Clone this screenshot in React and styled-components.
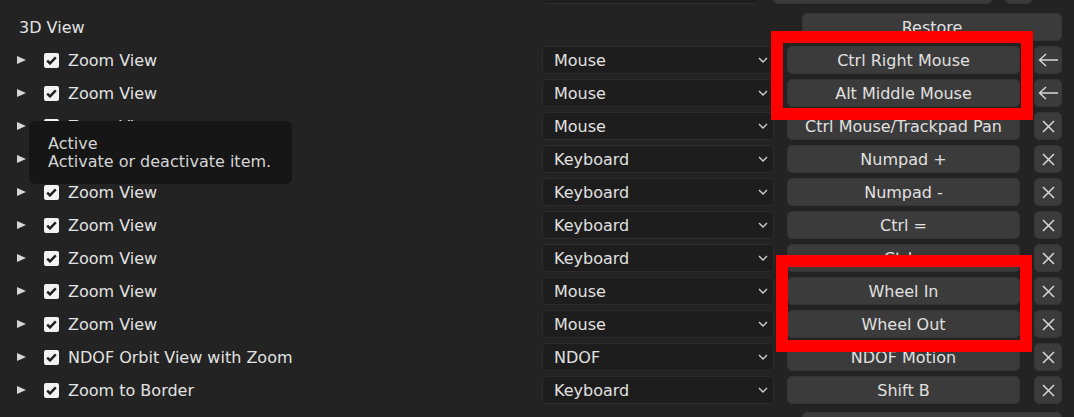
import React from 'react';
import styled, { createGlobalStyle } from 'styled-components';

const GlobalStyle = createGlobalStyle`
  html, body {
    margin: 0;
    padding: 0;
    background: #232323;
    overflow: hidden;
  }
  body {
    font-family: "DejaVu Sans", "Liberation Sans", sans-serif;
    color: #e4e4e4;
  }
`;

const ITEMS = [
  { label: 'Zoom View', type: 'Mouse', key: 'Ctrl Right Mouse', action: 'restore' },
  { label: 'Zoom View', type: 'Mouse', key: 'Alt Middle Mouse', action: 'restore' },
  { label: 'Zoom View', type: 'Mouse', key: 'Ctrl Mouse/Trackpad Pan', action: 'remove' },
  { label: 'Zoom View', type: 'Keyboard', key: 'Numpad +', action: 'remove' },
  { label: 'Zoom View', type: 'Keyboard', key: 'Numpad -', action: 'remove' },
  { label: 'Zoom View', type: 'Keyboard', key: 'Ctrl =', action: 'remove' },
  { label: 'Zoom View', type: 'Keyboard', key: 'Ctrl -', action: 'remove' },
  { label: 'Zoom View', type: 'Mouse', key: 'Wheel In', action: 'remove' },
  { label: 'Zoom View', type: 'Mouse', key: 'Wheel Out', action: 'remove' },
  { label: 'NDOF Orbit View with Zoom', type: 'NDOF', key: 'NDOF Motion', action: 'remove' },
  { label: 'Zoom to Border', type: 'Keyboard', key: 'Shift B', action: 'remove' },
];

const Disclosure = () => (
  <svg width="9" height="8" viewBox="0 0 9 8">
    <polygon points="0,0 9,4 0,8" fill="#d6d6d6" />
  </svg>
);

const Chevron = () => (
  <svg width="10" height="6" viewBox="0 0 10 6">
    <path d="M1 1 L5 5 L9 1" fill="none" stroke="#cfcfcf" strokeWidth="1.4" />
  </svg>
);

const CrossIcon = () => (
  <svg width="13" height="13" viewBox="0 0 13 13">
    <path d="M1 1 L12 12 M12 1 L1 12" stroke="#d8d8d8" strokeWidth="1.5" />
  </svg>
);

const BackArrow = () => (
  <svg width="21" height="14" viewBox="0 0 21 14">
    <path d="M20 7 H2 M8 1 L1.5 7 L8 13" fill="none" stroke="#d8d8d8" strokeWidth="1.4" />
  </svg>
);

const App = () => (
  <>
    <GlobalStyle />
    <Page>
      <PartialRow>
        <Spacer $width={541} />
        <Dropdown $width={219} />
        <KeyButton $width={219} $gap={13} />
        <IconButton $width={27} $gap={13} />
      </PartialRow>

      <HeaderRow>
        <SectionTitle>3D View</SectionTitle>
        <WideButton>Restore</WideButton>
      </HeaderRow>

      {ITEMS.map((item, i) => (
        <ItemRow key={i}>
          <LabelCell>
            <Disclosure />
            <Checkbox>
              <svg width="11" height="9" viewBox="0 0 11 9">
                <path d="M1.2 4.6 L4 7.4 L9.8 1.4" fill="none" stroke="#1c1c1c" strokeWidth="2.4" />
              </svg>
            </Checkbox>
            <Label>{item.label}</Label>
          </LabelCell>
          <Dropdown $width={232}>
            <span>{item.type}</span>
            <Chevron />
          </Dropdown>
          <KeyButton $width={233} $gap={13}>{item.key}</KeyButton>
          <IconButton $width={28} $gap={14}>
            {item.action === 'restore' ? <BackArrow /> : <CrossIcon />}
          </IconButton>
        </ItemRow>
      ))}

      <FooterRow>
        <WideButton />
      </FooterRow>

      <Tooltip>
        <div>Active</div>
        <div>Activate or deactivate item.</div>
      </Tooltip>

      <Highlight $left={771} $top={31} $width={262} $height={89} />
      <Highlight $left={776} $top={255} $width={256} $height={97} />
    </Page>
  </>
);

const Page = styled.div`
  position: relative;
  width: 1074px;
  height: 417px;
  overflow: hidden;
  display: flex;
  flex-direction: column;
  gap: 5px;
`;

const PartialRow = styled.div`
  display: flex;
  height: 28px;
  margin-top: -24px;
  margin-bottom: 4px;
`;

const Spacer = styled.div`
  width: ${(p) => p.$width}px;
  flex: none;
`;

const HeaderRow = styled.div`
  display: flex;
  align-items: center;
  height: 28px;
`;

const SectionTitle = styled.div`
  width: 802px;
  padding-left: 19px;
  box-sizing: border-box;
  font-size: 16px;
  color: #e2e2e2;
`;

const WideButton = styled.div`
  width: 260px;
  height: 28px;
  box-sizing: border-box;
  border-radius: 5px;
  background: #3b3b3b;
  border: 1px solid #353535;
  display: flex;
  align-items: center;
  justify-content: center;
  font-size: 16px;
  color: #e0e0e0;
`;

const ItemRow = styled.div`
  display: flex;
  align-items: center;
  height: 28px;
`;

const LabelCell = styled.div`
  width: 542px;
  flex: none;
  display: flex;
  align-items: center;
  padding-left: 17px;
  box-sizing: border-box;
`;

const Checkbox = styled.div`
  width: 15px;
  height: 15px;
  margin-left: 18px;
  border-radius: 2px;
  background: #f2f2f2;
  display: flex;
  align-items: center;
  justify-content: center;
`;

const Label = styled.span`
  margin-left: 9px;
  font-size: 16px;
  color: #e2e2e2;
  white-space: nowrap;
`;

const Dropdown = styled.div`
  width: ${(p) => p.$width}px;
  height: 28px;
  flex: none;
  box-sizing: border-box;
  border-radius: 5px;
  background: #1d1d1d;
  border: 1px solid #2c2c2c;
  display: flex;
  align-items: center;
  justify-content: space-between;
  padding: 0 5px 0 11px;
  font-size: 16px;
  color: #e0e0e0;
`;

const KeyButton = styled.div`
  width: ${(p) => p.$width}px;
  height: 28px;
  flex: none;
  margin-left: ${(p) => p.$gap}px;
  box-sizing: border-box;
  border-radius: 5px;
  background: #3b3b3b;
  border: 1px solid #353535;
  display: flex;
  align-items: center;
  justify-content: center;
  font-size: 16px;
  color: #e0e0e0;
  white-space: nowrap;
`;

const IconButton = styled.div`
  width: ${(p) => p.$width}px;
  height: 28px;
  flex: none;
  margin-left: ${(p) => p.$gap}px;
  box-sizing: border-box;
  border-radius: 5px;
  background: #3b3b3b;
  border: 1px solid #353535;
  display: flex;
  align-items: center;
  justify-content: center;
`;

const FooterRow = styled.div`
  display: flex;
  padding-left: 802px;
  margin-top: 3px;
`;

const Tooltip = styled.div`
  position: absolute;
  left: 29px;
  top: 121px;
  width: 263px;
  height: 63px;
  box-sizing: border-box;
  padding: 14px 0 0 19px;
  border-radius: 6px;
  background: #161616;
  font-size: 16px;
  line-height: 18px;
  color: #d4d4d4;
`;

const Highlight = styled.div`
  position: absolute;
  left: ${(p) => p.$left}px;
  top: ${(p) => p.$top}px;
  width: ${(p) => p.$width}px;
  height: ${(p) => p.$height}px;
  box-sizing: border-box;
  border: 12px solid #ff0000;
  pointer-events: none;
`;

export default App;
